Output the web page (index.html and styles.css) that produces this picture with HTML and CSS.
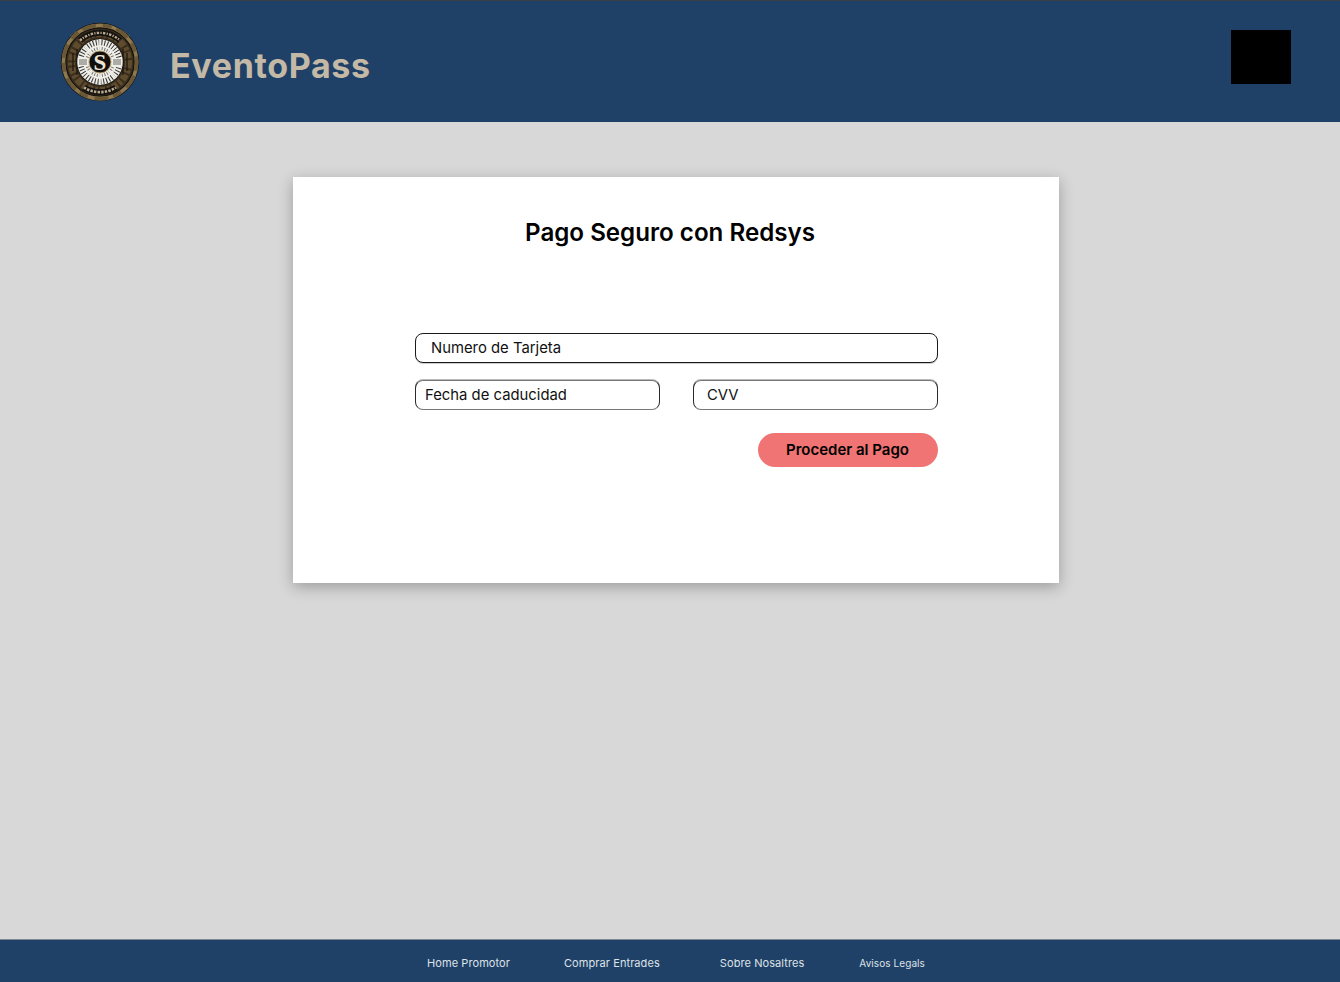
FILE: index.html
```html
<!DOCTYPE html>
<html lang="es">
<head>
<meta charset="utf-8">
<title>EventoPass</title>
<link rel="stylesheet" href="styles.css">
</head>
<body>
<header class="header">
  <svg class="logo" viewBox="0 0 80 80" width="80" height="80" aria-hidden="true">
    <path d="M10 14l6-5-1 7zM70 14l-6-5 1 7z" fill="#a88c52"/>
    <circle cx="40" cy="40" r="39.2" fill="#15120e"/>
    <circle cx="40" cy="40" r="36.6" fill="none" stroke="#8d7850" stroke-width="3.6"/>
    <circle cx="40" cy="40" r="36.6" fill="none" stroke="#6a5735" stroke-width="3.6" stroke-dasharray="9 5 14 7"/>
    <circle cx="40" cy="40" r="33.6" fill="#3a2e1d"/>
    <circle cx="40" cy="40" r="28.5" fill="none" stroke="#5f4c2e" stroke-width="7" stroke-dasharray="6 2 3 2"/>
    <path d="M13 31v18M67 31v18M17 27v26M63 27v26" stroke="#1a1510" stroke-width="1.2"/>
    <path d="M20 18.5a30 30 0 0 1 40 0" fill="none" stroke="#151210" stroke-width="6"/>
    <path d="M20 18.5a30 30 0 0 1 40 0" fill="none" stroke="#b8ab8e" stroke-width="2.4" stroke-dasharray="2.4 1.3 1.2 1.3"/>
    <path d="M24 65.5a30 30 0 0 0 32 0" fill="none" stroke="#151210" stroke-width="6"/>
    <path d="M24 65.5a30 30 0 0 0 32 0" fill="none" stroke="#b8ab8e" stroke-width="2.6" stroke-dasharray="2.4 1.2"/>
    <circle cx="40" cy="40" r="23.6" fill="#171512"/>
    <circle cx="40" cy="40" r="22.8" fill="#efeee9"/>
    <circle cx="40" cy="40" r="19.5" fill="none" stroke="#33322f" stroke-width="5.5" stroke-dasharray="1 1.9"/>
    <circle cx="40" cy="40" r="13.5" fill="none" stroke="#6b6a65" stroke-width="3" stroke-dasharray="0.9 1.7"/>
    <path d="M40 17v46M24 24l32 32M56 24L24 56" stroke="#efeee9" stroke-width="1.5"/>
    <path d="M18 36h10v8H18zM52 36h10v8H52z" fill="#efeee9"/>
    <path d="M19 38h8M19 40h8M19 42h8M53 38h8M53 40h8M53 42h8" stroke="#6b6a65" stroke-width="1"/>
    <circle cx="40" cy="40" r="11" fill="#11100e" stroke="#b09a6c" stroke-width="1"/>
    <text class="logo-s" x="40" y="48" text-anchor="middle">S</text>
  </svg>
  <span class="brand">EventoPass</span>
  <div class="avatar"></div>
</header>
<main class="main">
  <section class="card">
    <h1 class="title">Pago Seguro con Redsys</h1>
    <form class="form">
      <div class="field field-wide">Numero de Tarjeta</div>
      <div class="row">
        <div class="field field-date">Fecha de caducidad</div>
        <div class="field field-cvv">CVV</div>
      </div>
      <div class="actions">
        <button class="pay" type="button">Proceder al Pago</button>
      </div>
    </form>
  </section>
</main>
<footer class="footer">
  <a class="link link-home">Home Promotor</a>
  <a class="link link-buy">Comprar Entrades</a>
  <a class="link link-about">Sobre Nosaltres</a>
  <a class="link link-legal">Avisos Legals</a>
</footer>
</body>
</html>
```
FILE: styles.css
```css
* { box-sizing: border-box; }
html, body { height: 100%; }
body {
  margin: 0;
  height: 982px;
  display: flex;
  flex-direction: column;
  background: #d8d8d8;
  font-family: Inter, "Liberation Sans", sans-serif;
  color: #000;
  overflow: hidden;
}
.header {
  height: 122px;
  flex: none;
  display: flex;
  align-items: flex-start;
  padding: 21px 49px 0 60px;
  background: #1f4168;
  border-top: 1px solid #3a3f48;
}
.logo { flex: none; display: block; }
.logo-s { font-family: "Liberation Serif", serif; font-size: 23px; font-weight: 700; fill: #ece5d4; }
.brand {
  margin-left: 30px;
  margin-top: 24px;
  font-weight: 700;
  font-size: 34px;
  line-height: 40px;
  letter-spacing: 0.65px;
  color: #c4b9a6;
}
.avatar {
  width: 60px;
  height: 54px;
  margin-left: auto;
  margin-top: 8px;
  background: #000;
}
.main {
  flex: 1;
  padding-top: 55px;
}
.card {
  width: 766px;
  height: 406px;
  margin-left: 293px;
  background: #fff;
  box-shadow: 0 4px 14px rgba(0,0,0,.28);
  padding: 41px 121px 0 122px;
}
.title {
  margin: 0 12px 0 -122px;
  width: 754px;
  text-align: center;
  font-size: 24.15px;
  line-height: 30px;
  font-weight: 600;
}
.form { margin-top: 85px; display: flex; flex-direction: column; }
.field {
  height: 30px;
  border: 1px solid #1a1a1a;
  border-radius: 8px;
  font-size: 14.85px;
  line-height: 29px;
  color: #111;
  background: #fff;
}
.field-wide { padding-left: 15px; box-shadow: 0 1px 0 #ccc; }
.row { display: flex; justify-content: space-between; margin-top: 17px; }
.field-date, .field-cvv {
  width: 245px;
  border-color: #777 #2a2a2a;
  box-shadow: 0 -1px 0 #bbb;
}
.field-date { padding-left: 9px; }
.field-cvv { padding-left: 13px; }
.actions { display: flex; justify-content: flex-end; margin-top: 23px; }
.pay {
  width: 180px;
  height: 34px;
  border: 0;
  border-radius: 17px;
  background: #ef7473;
  font-family: inherit;
  font-size: 15px;
  font-weight: 600;
  color: #000;
  padding: 0 1px 1px 0;
}
.footer {
  height: 43px;
  flex: none;
  background: #1f4168;
  border-top: 1px solid #7b8794;
  display: flex;
  align-items: center;
  padding: 3px 0 0 427px;
}
.link { font-size: 11px; letter-spacing: 0.08px; color: #dfe2e6; white-space: nowrap; }
.link-buy { margin-left: 54px; }
.link-about { margin-left: 60px; }
.link-legal { margin-left: 55px; font-size: 10px; }
```
